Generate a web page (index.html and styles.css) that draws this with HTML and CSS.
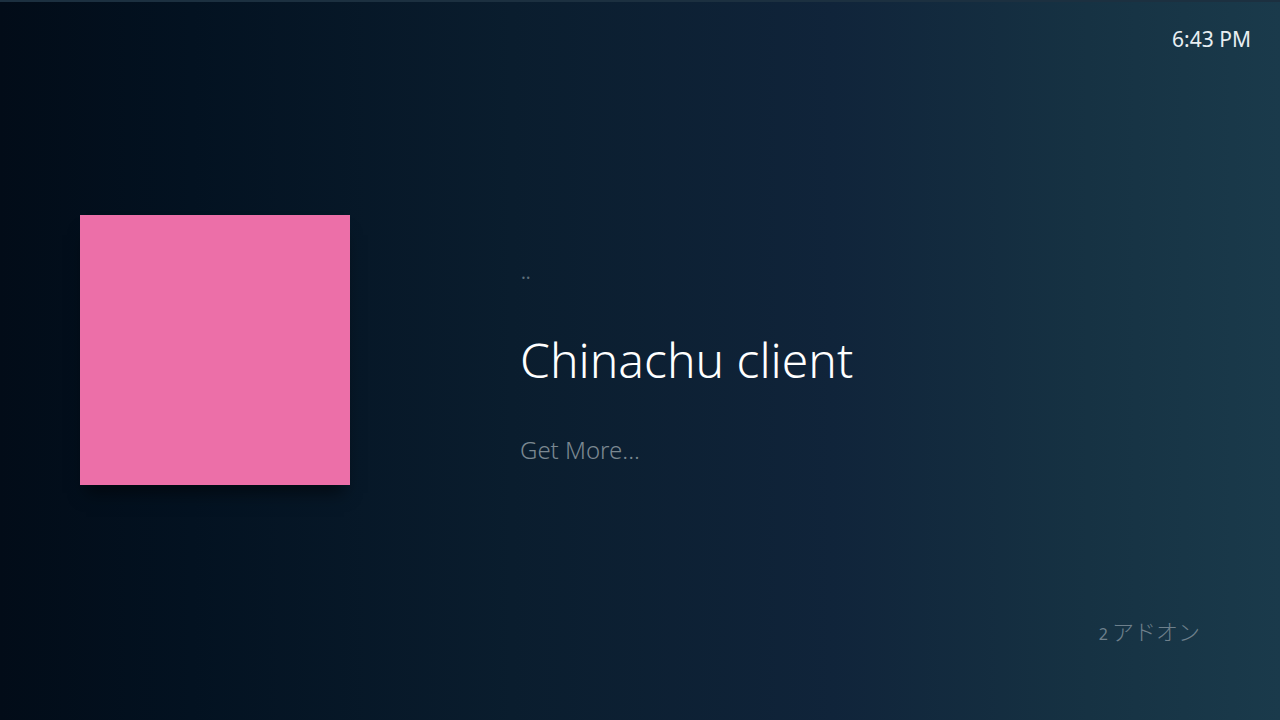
FILE: index.html
```html
<!DOCTYPE html>
<html lang="ja">
<head>
<meta charset="utf-8">
<link rel="stylesheet" href="styles.css">
</head>
<body>
<div class="screen">
  <header class="topbar"><span class="clock">6:43 PM</span></header>
  <main class="content">
    <div class="thumb"></div>
    <div class="list">
      <div class="item parent">..</div>
      <div class="item focused">Chinachu client</div>
      <div class="item more">Get More...</div>
    </div>
  </main>
  <footer class="footer"><span class="count">2</span><span class="label">アドオン</span></footer>
</div>
</body>
</html>
```
FILE: styles.css
```css
* { box-sizing: border-box; }
html, body { margin: 0; padding: 0; }
body {
  width: 1280px;
  height: 720px;
  overflow: hidden;
  font-family: "Noto Sans", "Noto Sans CJK JP", sans-serif;
}
.screen {
  width: 1280px;
  height: 720px;
  background: linear-gradient(90deg, #020c18 0%, #031221 15%, #0a1d2e 40%, #10243a 65%, #163243 85%, #1a3a4b 100%);
  border-top: 2px solid #1c3040;
  display: flex;
  flex-direction: column;
  color: #fff;
}
.topbar {
  height: 76px;
  display: flex;
  justify-content: flex-end;
  padding: 27px 29px 0 0;
}
.clock {
  font-size: 21px;
  color: #e8eef2;
  line-height: 1;
}
.content {
  display: flex;
  align-items: flex-start;
  padding: 137px 0 0 80px;
  height: 534px;
}
.thumb {
  width: 270px;
  height: 270px;
  background: #ec6fa8;
  box-shadow: 0 14px 16px -6px rgba(0, 0, 0, 0.5);
  flex: none;
}
.list {
  margin-left: 170px;
  margin-top: 42px;
  display: flex;
  flex-direction: column;
}
.item { white-space: nowrap; }
.parent {
  font-size: 18px;
  color: #5f6f7a;
  height: 30px;
  line-height: 30px;
  margin-left: 1px;
}
.focused {
  font-size: 48px;
  font-weight: 300;
  color: #ffffff;
  margin-top: 43px;
  line-height: 60px;
}
.more {
  font-size: 24px;
  font-weight: 300;
  color: #7b8891;
  margin-top: 42px;
  line-height: 36px;
}
.footer {
  display: flex;
  justify-content: flex-end;
  align-items: baseline;
  padding: 2px 80px 0 0;
  color: #6e808c;
}
.count { font-size: 16px; margin-right: 4px; }
.label { font-size: 22px; font-weight: 300; }
```
